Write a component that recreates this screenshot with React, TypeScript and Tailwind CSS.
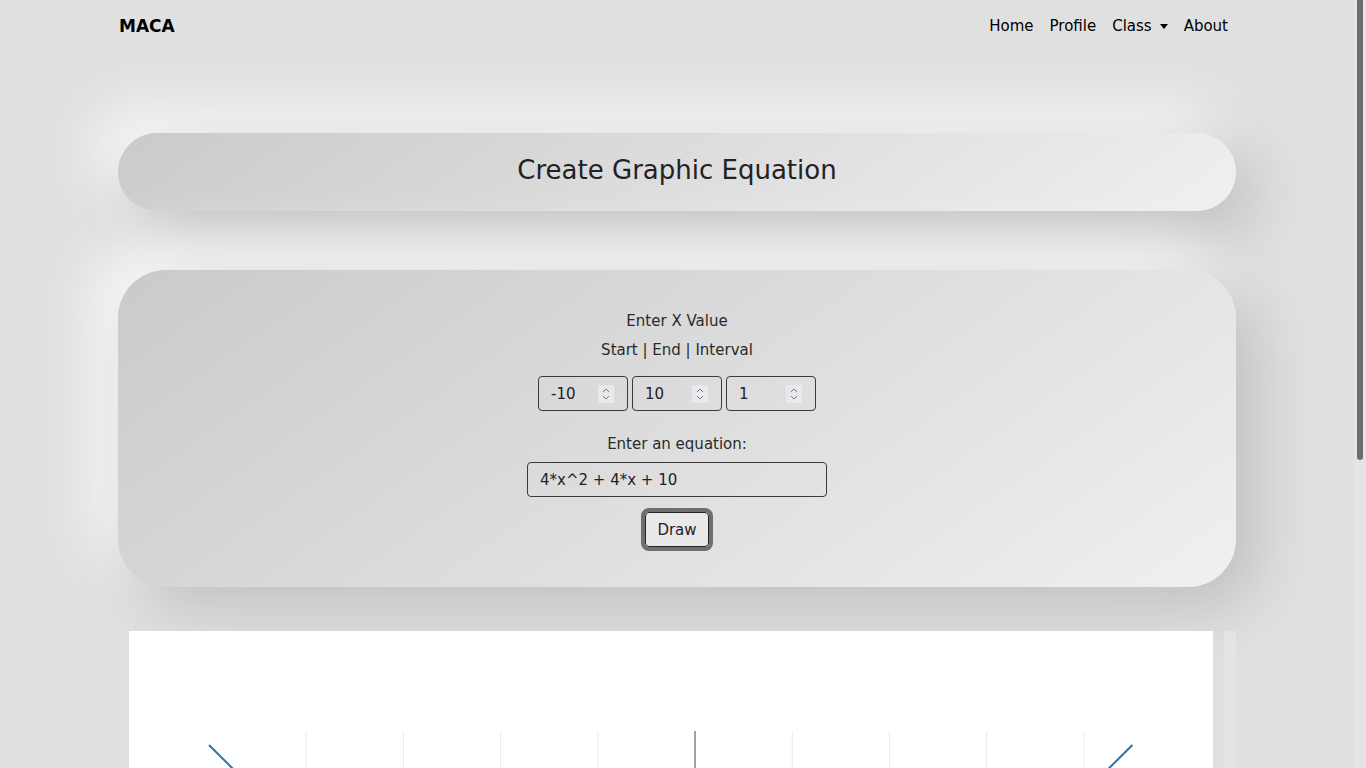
const xs = Array.from({ length: 20 }, (_, i) => i - 10);
const f = (x: number) => 4 * x * x + 4 * x + 10;
const px = (x: number) => 566 + x * 48.6;
const py = (v: number) => 114 + (370 - v) * 0.6704;

function Spinner() {
  return (
    <svg width="16" height="18" viewBox="0 0 16 18" className="shrink-0">
      <rect width="16" height="18" fill="#e9e9ed" />
      <path d="M5 7 L8 4 L11 7" fill="none" stroke="#7a7a7a" strokeWidth="1" />
      <path d="M5 11 L8 14 L11 11" fill="none" stroke="#7a7a7a" strokeWidth="1" />
    </svg>
  );
}

function NumberBox({ value }: { value: string }) {
  return (
    <div className="flex h-[35px] w-[90px] items-center justify-between rounded-[4px] border border-[#3a3a3a] pl-3 pr-[13px] text-[15px] text-[#222]">
      <span>{value}</span>
      <Spinner />
    </div>
  );
}

function Chart() {
  const grid = [-8, -6, -4, -2, 2, 4, 6, 8];
  const yTicks = [100, 200, 300];
  const line = xs.map((x) => `${px(x).toFixed(1)},${py(f(x)).toFixed(1)}`).join(" ");
  return (
    <svg width="1084" height="450" viewBox="0 0 1084 450" className="block">
      {grid.map((g) => (
        <line key={g} x1={px(g)} x2={px(g)} y1="100" y2="370" stroke="#ebebeb" strokeWidth="1" />
      ))}
      {yTicks.map((t) => (
        <line key={t} x1="80" x2="1004" y1={py(t)} y2={py(t)} stroke="#ebebeb" strokeWidth="1" />
      ))}
      <line x1={px(0)} x2={px(0)} y1="100" y2="370" stroke="#444" strokeWidth="1" />
      <line x1="80" x2="1004" y1={py(0)} y2={py(0)} stroke="#444" strokeWidth="1" />
      <polyline points={line} fill="none" stroke="#1f77b4" strokeWidth="2" strokeLinejoin="round" />
    </svg>
  );
}

export default function App() {
  return (
    <div className="h-screen overflow-y-scroll bg-[#e0e0e0] font-['DejaVu_Sans',sans-serif] text-[#222] [scrollbar-width:none]">
      {/* scrollbar look-alike */}
      <div className="fixed right-0 top-0 h-screen w-3 bg-[#e4e4e4]">
        <div className="ml-[3px] h-[460px] w-[6px] rounded-b-full bg-[#6e6e6e]" />
      </div>

      <div className="pr-3">
        <div className="mx-auto w-[1118px] pb-[201px]">
          {/* Navbar */}
          <nav className="flex h-[50px] items-center justify-between">
            <span className="pl-px pt-[3px] text-[17px] font-bold text-black">MACA</span>
            <ul className="flex items-center pt-[3px] text-[15px] text-black">
              <li className="px-2">Home</li>
              <li className="px-2">Profile</li>
              <li className="flex items-center px-2">
                Class
                <span className="ml-2 h-0 w-0 border-x-[4px] border-t-[5px] border-x-transparent border-t-black" />
              </li>
              <li className="px-2">About</li>
            </ul>
          </nav>

          {/* Title */}
          <div className="mt-[83px] flex h-[78px] items-center justify-center rounded-full bg-[linear-gradient(145deg,#cacaca,#f0f0f0)] pb-[4px] shadow-[20px_20px_60px_#bebebe,-20px_-20px_60px_#ffffff]">
            <h1 className="text-[26px] text-[#222]">Create Graphic Equation</h1>
          </div>

          {/* Form */}
          <div className="mt-[59px] flex flex-col items-center rounded-[48px] bg-[linear-gradient(145deg,#cacaca,#f0f0f0)] pb-[40px] pt-[40px] text-[15px] leading-[22px] text-[#2a2a2a] shadow-[20px_20px_60px_#bebebe,-20px_-20px_60px_#ffffff]">
            <p>Enter X Value</p>
            <p className="mt-[7px]">Start | End | Interval</p>
            <div className="mt-[15px] flex gap-1">
              <NumberBox value="-10" />
              <NumberBox value="10" />
              <NumberBox value="1" />
            </div>
            <p className="mt-[22px]">Enter an equation:</p>
            <div className="mt-[7px] flex h-[35px] w-[300px] items-center rounded-[4px] border border-[#3a3a3a] px-3 text-[#222]">
              4*x^2 + 4*x + 10
            </div>
            <button className="mt-[15px] h-[35px] w-[64px] rounded-[4px] border border-[#222] bg-[#e9e9e9] text-[#222] outline-[4px] outline-offset-0 outline-[#6f6f6f] [outline-style:solid]">
              Draw
            </button>
          </div>

          {/* Chart */}
          <div className="mt-[44px] flex">
            <div className="ml-[11px] w-[1084px] bg-white">
              <Chart />
            </div>
            <div className="ml-[11px] h-[450px] w-3 bg-[#e4e4e4]" />
          </div>
        </div>
      </div>
    </div>
  );
}
